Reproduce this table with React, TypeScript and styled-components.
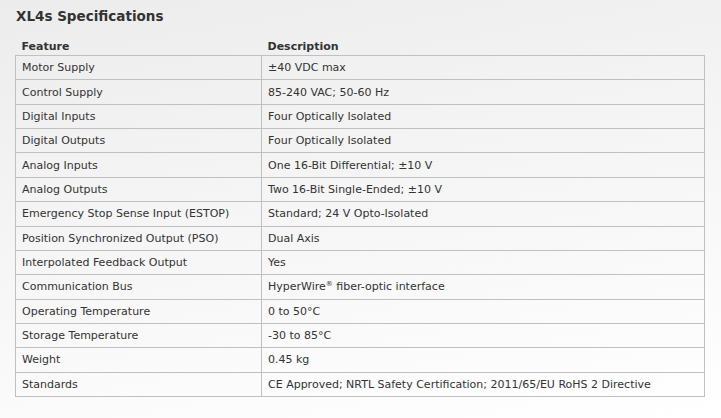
import React from "react";
import styled, { createGlobalStyle } from "styled-components";

const Global = createGlobalStyle`
  html, body { margin: 0; padding: 0; }
  body {
    width: 721px;
    height: 418px;
    overflow: hidden;
    background: linear-gradient(170deg, #ececec 0%, #f5f5f5 45%, #ffffff 100%);
    font-family: "DejaVu Sans", Verdana, sans-serif;
    color: #333;
  }
`;

const Page = styled.div`
  padding: 6px 16px 0 15px;
  width: 690px;
`;

const Title = styled.h2`
  margin: 0 0 12px 1px;
  font-size: 13.5px;
  line-height: 20px;
  font-weight: bold;
  color: #333;
`;

const Table = styled.table`
  width: 690px;
  border-collapse: collapse;
  font-size: 11px;
`;

const HeadCell = styled.th`
  text-align: left;
  font-weight: bold;
  padding: 0 6px;
  height: 17px;
  vertical-align: middle;
  color: #333;
`;

const Row = styled.tr``;

const Cell = styled.td<{ $first?: boolean }>`
  border: 1px solid #c0c0c0;
  padding: 0 6px;
  height: 23.36px;
  width: ${(p) => (p.$first ? "233px" : "auto")};
  vertical-align: middle;
  white-space: nowrap;
`;

const Sup = styled.sup`
  font-size: 7px;
  vertical-align: 4px;
  line-height: 0;
`;

const rows: [string, React.ReactNode][] = [
  ["Motor Supply", "±40 VDC max"],
  ["Control Supply", "85-240 VAC; 50-60 Hz"],
  ["Digital Inputs", "Four Optically Isolated"],
  ["Digital Outputs", "Four Optically Isolated"],
  ["Analog Inputs", "One 16-Bit Differential; ±10 V"],
  ["Analog Outputs", "Two 16-Bit Single-Ended; ±10 V"],
  ["Emergency Stop Sense Input (ESTOP)", "Standard; 24 V Opto-Isolated"],
  ["Position Synchronized Output (PSO)", "Dual Axis"],
  ["Interpolated Feedback Output", "Yes"],
  [
    "Communication Bus",
    <>
      HyperWire<Sup>®</Sup> fiber-optic interface
    </>,
  ],
  ["Operating Temperature", "0 to 50°C"],
  ["Storage Temperature", "-30 to 85°C"],
  ["Weight", "0.45 kg"],
  ["Standards", "CE Approved; NRTL Safety Certification; 2011/65/EU RoHS 2 Directive"],
];

export default function App() {
  return (
    <>
      <Global />
      <Page>
        <Title>XL4s Specifications</Title>
        <Table>
          <thead>
            <tr>
              <HeadCell>Feature</HeadCell>
              <HeadCell>Description</HeadCell>
            </tr>
          </thead>
          <tbody>
            {rows.map(([f, d], i) => (
              <Row key={i}>
                <Cell $first>{f}</Cell>
                <Cell>{d}</Cell>
              </Row>
            ))}
          </tbody>
        </Table>
      </Page>
    </>
  );
}
